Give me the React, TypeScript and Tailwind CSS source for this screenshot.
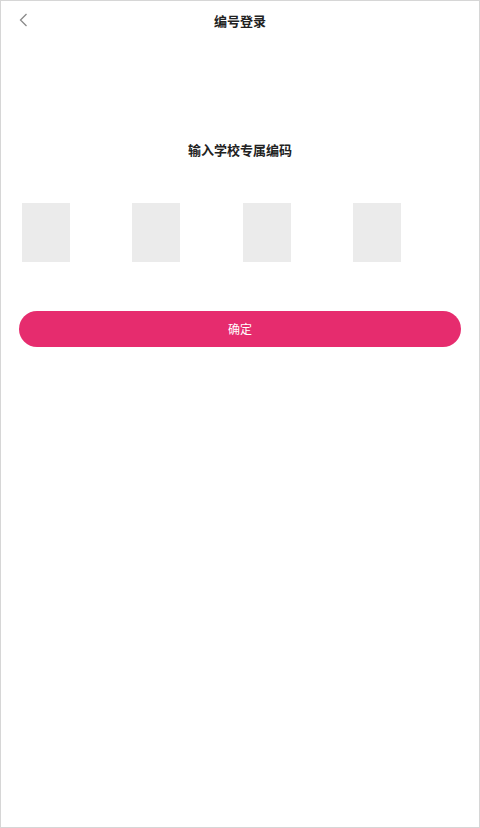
export default function App() {
  const boxes = [0, 1, 2, 3]
  return (
    <div
      className="w-[480px] h-[828px] bg-white border border-[#d6d6d6] flex flex-col"
      style={{ fontFamily: '"Noto Sans CJK SC", "Noto Sans", sans-serif' }}
    >
      {/* 頂部導航 */}
      <div className="relative h-[40px] flex items-start justify-center pt-[13px]">
        <button type="button" className="absolute left-[16px] top-[11px] p-0">
          <svg width="14" height="16" viewBox="0 0 14 16" fill="none">
            <path d="M9.5 2 L3.5 8 L9.5 14" stroke="#8a8a8a" strokeWidth="1.3" />
          </svg>
        </button>
        <span className="text-[13px] font-bold text-[#222] leading-[13px]">编号登录</span>
      </div>

      {/* 標題 */}
      <div className="mt-[101px] text-center text-[13px] font-bold text-[#222] leading-[16px]">
        输入学校专属编码
      </div>

      {/* 編碼輸入框 */}
      <div className="mt-[45px] pl-[21px] flex gap-[62.3px]">
        {boxes.map((i) => (
          <div key={i} className="w-[48px] h-[59px] bg-[#ebebeb]" />
        ))}
      </div>

      {/* 確定按鈕 */}
      <div className="mt-[49px] px-[18px]">
        <button
          type="button"
          className="w-full h-[36px] rounded-full bg-[#e62c6e] text-white text-[12px] flex items-center justify-center"
        >
          确定
        </button>
      </div>
    </div>
  )
}
